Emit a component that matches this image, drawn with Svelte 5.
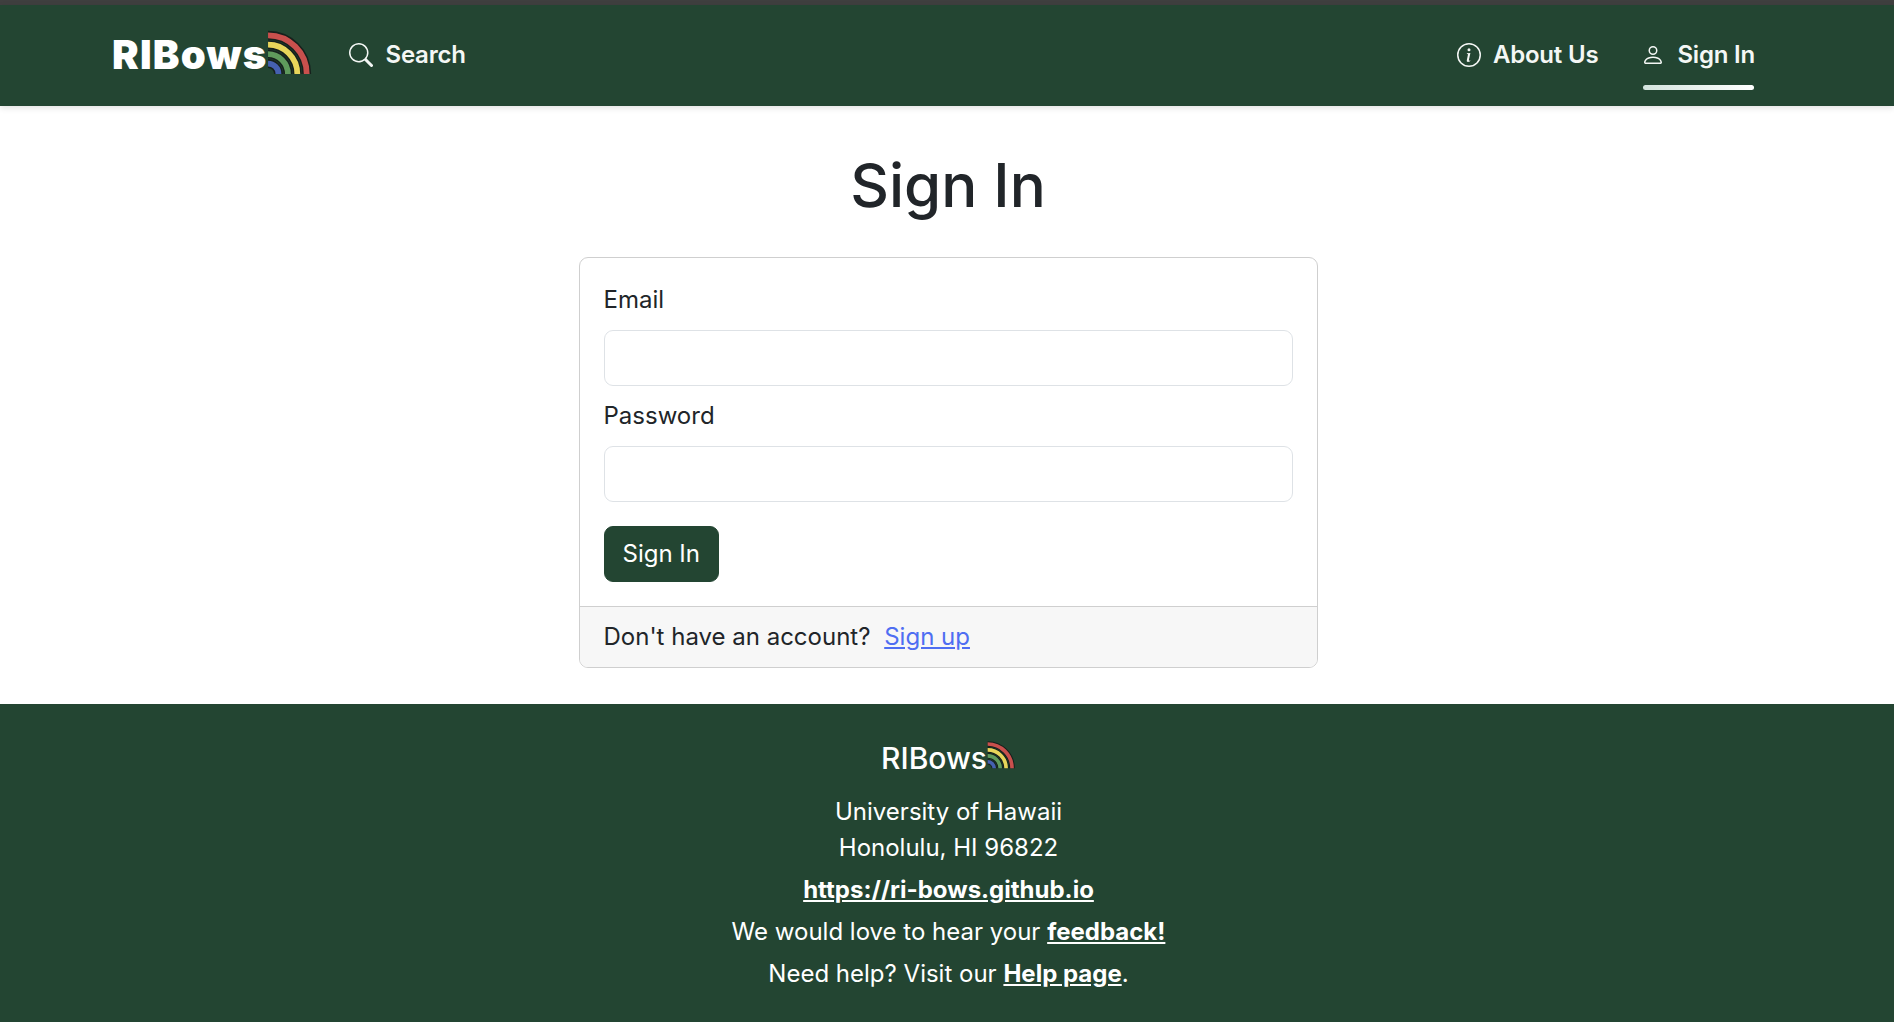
<script lang="ts">
  const rainbow = [
    { r: 37, color: '#c9504d' },
    { r: 28, color: '#e8d55a' },
    { r: 19, color: '#5f9a5c' },
    { r: 10, color: '#4560b0' }
  ]

  const arc = (r: number) => `M1 ${43 - r} A${r} ${r} 0 0 1 ${1 + r} 43`
</script>

{#snippet bow(cls: string)}
  <svg class={cls} viewBox="0 0 44 44" aria-hidden="true">
    {#each rainbow as band}
      <path d={arc(band.r)} fill="none" stroke="#16201c" stroke-width="8.5" />
      <path d={arc(band.r)} fill="none" stroke={band.color} stroke-width="5.5" />
    {/each}
  </svg>
{/snippet}

<div class="topline"></div>
<header class="navbar">
  <a class="brand" href="#home">RIBows{@render bow('brand-bow')}</a>
  <a class="nav-link search" href="#search">
    <svg viewBox="0 0 16 16" fill="currentColor" aria-hidden="true"><path d="M11.742 10.344a6.5 6.5 0 1 0-1.397 1.398h-.001c.03.04.062.078.098.115l3.85 3.85a1 1 0 0 0 1.415-1.414l-3.85-3.85a1.007 1.007 0 0 0-.115-.1zM12 6.5a5.5 5.5 0 1 1-11 0 5.5 5.5 0 0 1 11 0z" /></svg>
    Search
  </a>
  <div class="spacer"></div>
  <a class="nav-link about" href="#about">
    <svg viewBox="0 0 16 16" fill="currentColor" aria-hidden="true"><path d="M8 15A7 7 0 1 1 8 1a7 7 0 0 1 0 14zm0 1A8 8 0 1 0 8 0a8 8 0 0 0 0 16z" /><path d="m8.93 6.588-2.29.287-.082.38.45.083c.294.07.352.176.288.469l-.738 3.468c-.194.897.105 1.319.808 1.319.545 0 1.178-.252 1.465-.598l.088-.416c-.2.176-.492.246-.686.246-.275 0-.375-.193-.304-.533L8.93 6.588zM9 4.5a1 1 0 1 1-2 0 1 1 0 0 1 2 0z" /></svg>
    About Us
  </a>
  <a class="nav-link signin active" href="#signin">
    <svg viewBox="0 0 16 16" fill="currentColor" aria-hidden="true"><path d="M8 8a3 3 0 1 0 0-6 3 3 0 0 0 0 6zm2-3a2 2 0 1 1-4 0 2 2 0 0 1 4 0zm4 8c0 1-1 1-1 1H3s-1 0-1-1 1-4 6-4 6 3 6 4zm-1-.004c-.001-.246-.154-.986-.832-1.664C11.516 10.68 10.289 10 8 10c-2.29 0-3.516.68-4.168 1.332-.678.678-.83 1.418-.832 1.664h10z" /></svg>
    Sign In
  </a>
</header>

<main class="page">
  <h1>Sign In</h1>
  <section class="card">
    <form class="card-body">
      <label for="email">Email</label>
      <input id="email" type="text" />
      <label for="password">Password</label>
      <input id="password" type="password" />
      <button type="button">Sign In</button>
    </form>
    <div class="card-footer">Don't have an account? <a href="#signup">Sign up</a></div>
  </section>
</main>

<footer class="footer">
  <div class="footer-brand">RIBows{@render bow('footer-bow')}</div>
  <div class="address">University of Hawaii<br />Honolulu, HI 96822</div>
  <p><a href="#site">https://ri-bows.github.io</a></p>
  <p>We would love to hear your <a href="#feedback">feedback!</a></p>
  <p>Need help? Visit our <a href="#help">Help page</a>.</p>
</footer>

<style>
  :global(body) {
    margin: 0;
    background: #fff;
    color: #212529;
    font-family: Inter, 'Liberation Sans', sans-serif;
    font-size: 24px;
    line-height: 1.5;
  }

  .topline {
    height: 5px;
    background: #3f3f3f;
  }

  .navbar {
    height: 101px;
    box-sizing: border-box;
    padding: 0 139px 2px 112px;
    display: flex;
    align-items: center;
    background: #234532;
    box-shadow: 0 2px 6px rgba(0, 0, 0, 0.12);
    position: relative;
  }

  .brand {
    display: flex;
    align-items: center;
    color: #fff;
    font-size: 40px;
    font-weight: 900;
    letter-spacing: 1.2px;
    text-decoration: none;
  }

  .brand-bow {
    width: 46px;
    height: 46px;
    margin: -5px -1px 0 0;
  }

  .nav-link {
    display: flex;
    align-items: center;
    gap: 12px;
    color: #f4f7f5;
    font-weight: 600;
    letter-spacing: -0.2px;
    text-decoration: none;
    white-space: nowrap;
  }

  .nav-link svg {
    width: 24px;
    height: 24px;
  }

  .search {
    margin-left: 37px;
  }

  .spacer {
    flex: 1;
  }

  .signin {
    margin-left: 45px;
    position: relative;
  }

  .signin svg {
    margin-left: -2px;
  }

  .active::after {
    content: '';
    position: absolute;
    left: 0;
    right: 1px;
    bottom: -17px;
    height: 5px;
    border-radius: 3px;
    background: linear-gradient(90deg, #d3e3dd, #fff);
  }

  .page {
    display: flex;
    flex-direction: column;
    align-items: center;
    padding: 0 0 36px 2px;
  }

  h1 {
    margin: 43px 0 36px;
    font-size: 60px;
    font-weight: 500;
    line-height: 1.2;
  }

  .card {
    width: 739px;
    box-sizing: border-box;
    border: 1px solid #cfcfcf;
    border-radius: 9px;
    overflow: hidden;
  }

  .card-body {
    display: flex;
    flex-direction: column;
    align-items: flex-start;
    padding: 24px;
  }

  label {
    margin-bottom: 12px;
  }

  input {
    width: 100%;
    height: 56px;
    box-sizing: border-box;
    margin-bottom: 12px;
    border: 1px solid #dee2e6;
    border-radius: 9px;
    background: #fff;
  }

  button {
    margin-top: 12px;
    padding: 9px 18px;
    border: 1px solid #234532;
    border-radius: 9px;
    background: #234532;
    color: #fff;
    font: inherit;
  }

  .card-footer {
    padding: 12px 24px;
    border-top: 1px solid #cfcfcf;
    background: #f7f7f7;
  }

  .card-footer a {
    margin-left: 7px;
    color: #4f6ef2;
  }

  .footer {
    padding: 32px 0 30px 3px;
    border-bottom: 1px solid #16201c;
    background: #234532;
    color: #fff;
    text-align: center;
  }

  .footer-brand {
    display: flex;
    justify-content: center;
    align-items: center;
    font-size: 30px;
    font-weight: 500;
  }

  .footer-bow {
    width: 29px;
    height: 29px;
    margin-top: -8px;
  }

  .address {
    margin-top: 13px;
  }

  .footer p {
    margin: 6px 0 0;
  }

  .footer a {
    color: #fff;
    font-weight: 700;
  }
</style>
